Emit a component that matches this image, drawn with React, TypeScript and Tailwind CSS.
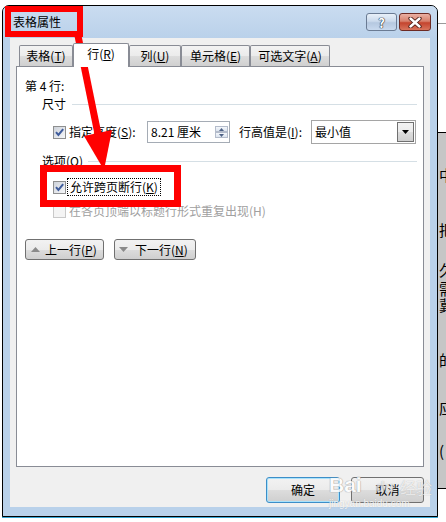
import React from "react";

function Check({ checked, disabled }: { checked?: boolean; disabled?: boolean }) {
  return (
    <div
      className={
        disabled
          ? "w-[13px] h-[13px] shrink-0 border border-[#c9c9c9] bg-[#f4f4f4]"
          : "w-[13px] h-[13px] shrink-0 border border-[#8e8f8f] bg-[linear-gradient(135deg,#cdd2da,#f6f7f9)] flex items-center justify-center"
      }
    >
      {checked && (
        <svg width="11" height="11" viewBox="0 0 11 11">
          <path d="M2 5.2 L4.4 8 L9.2 2.2" fill="none" stroke="#3f5c9c" strokeWidth="2" />
        </svg>
      )}
    </div>
  );
}

function Tab({ w, selected, children }: { w: string; selected?: boolean; children: React.ReactNode }) {
  return (
    <div
      className={
        selected
          ? `${w} h-[24px] -mb-px relative z-10 bg-white border border-b-0 border-[#898c95] rounded-t-[2px] flex items-center justify-center pb-[3px]`
          : `${w} h-[21px] bg-[linear-gradient(#f3f3f3_0%,#ebebeb_50%,#dddddd_50%,#d0d0d0_100%)] border border-b-0 border-[#898c95] rounded-t-[2px] flex items-center justify-center`
      }
    >
      <span className="text-[12px] leading-[14px] text-black whitespace-nowrap">{children}</span>
    </div>
  );
}

const btnBase =
  "flex items-center border border-[#707070] rounded-[3px] bg-[linear-gradient(#f2f2f2_0%,#ebebeb_50%,#dddddd_50%,#cfcfcf_100%)]";

export default function App() {
  return (
    <div className="relative w-[446px] h-[522px] overflow-hidden bg-white flex font-['Noto_Sans_CJK_SC','Noto_Sans',sans-serif] text-black">
      {/* left gap */}
      <div className="w-[2px] shrink-0" />

      {/* dialog */}
      <div className="w-[436px] h-[512px] mt-[5px] shrink-0 border border-black rounded-t-[7px] bg-[#b9d1ea] flex flex-col overflow-hidden shadow-[0_1px_0_#39a6d4]">
        {/* title bar */}
        <div className="h-[32px] shrink-0 flex items-center pl-[10px] pr-[6px] bg-[linear-gradient(#cadcf0,#bad1ea)]">
          <span className="text-[12px] leading-[14px]">表格属性</span>
          <div className="ml-auto flex gap-[2px]">
            <div className="w-[31px] h-[18px] rounded-[3px] border border-[#6a7b93] bg-[linear-gradient(#e8f0f9_0%,#cbdaec_45%,#b5c8e0_55%,#c8d9ee_100%)] flex items-center justify-center">
              <span className="text-[13px] leading-[13px] font-bold text-white [text-shadow:0_0_1px_#1e2a3a,0_0_1px_#1e2a3a,0_0_1px_#1e2a3a]">
                ?
              </span>
            </div>
            <div className="w-[32px] h-[18px] rounded-[3px] border border-[#6d2a23] bg-[linear-gradient(#eab0a3_0%,#d7806c_45%,#c4442e_55%,#d8755d_100%)] flex items-center justify-center">
              <svg width="16" height="11" viewBox="0 0 16 11">
                <path d="M3.5 1.5 L12.5 9.5 M12.5 1.5 L3.5 9.5" stroke="#4a1a14" strokeWidth="4.2" strokeLinecap="round" />
                <path d="M3.5 1.5 L12.5 9.5 M12.5 1.5 L3.5 9.5" stroke="#ffffff" strokeWidth="2.4" strokeLinecap="round" />
              </svg>
            </div>
          </div>
        </div>

        {/* body */}
        <div className="mx-[7px] w-[420px] h-[469px] shrink-0 bg-[#f0f0f0] flex flex-col">
          {/* tabs */}
          <div className="h-[28px] shrink-0 flex items-end pl-[9px]">
            <Tab w="w-[54px]">
              表格(<span className="underline">T</span>)
            </Tab>
            <Tab w="w-[56px]" selected>
              行(<span className="underline">R</span>)
            </Tab>
            <Tab w="w-[52px]">
              列(<span className="underline">U</span>)
            </Tab>
            <Tab w="w-[69px]">
              单元格(<span className="underline">E</span>)
            </Tab>
            <Tab w="w-[80px]">
              可选文字(<span className="underline">A</span>)
            </Tab>
          </div>

          {/* panel */}
          <div className="ml-[6px] w-[408px] h-[401px] shrink-0 bg-white border border-[#898c95] flex flex-col pl-[8px] pr-[6px] text-[12px] leading-[16px]">
            <div className="h-[16px] mt-[11px] flex items-center">第 4 行:</div>

            <div className="h-[16px] mt-[2px] flex items-center pl-[17px]">
              <span>尺寸</span>
              <div className="ml-[6px] flex-1 h-px bg-[#d5dfe5]" />
            </div>

            <div className="h-[24px] mt-[8px] flex items-center">
              <div className="ml-[28px] flex items-center">
                <Check checked />
                <span className="ml-[3px] w-[78px] whitespace-nowrap">
                  指定高度(<span className="underline">S</span>):
                </span>
              </div>
              <div className="w-[83px] h-[22px] border border-[#a5acb5] bg-white flex items-center pl-[3px]">
                <span className="whitespace-nowrap">8.21 厘米</span>
                <div className="ml-auto mr-[1px] w-[13px] flex flex-col gap-0">
                  <div className="h-[6px] border border-[#b4bccb] bg-[linear-gradient(#f4f7fb,#dce4ef)] flex items-center justify-center">
                    <svg width="5" height="3" viewBox="0 0 5 3">
                      <path d="M0 3 L2.5 0 L5 3 Z" fill="#4d6185" />
                    </svg>
                  </div>
                  <div className="h-[6px] border border-[#b4bccb] bg-[linear-gradient(#f4f7fb,#dce4ef)] flex items-center justify-center">
                    <svg width="5" height="3" viewBox="0 0 5 3">
                      <path d="M0 0 L2.5 3 L5 0 Z" fill="#4d6185" />
                    </svg>
                  </div>
                </div>
              </div>
              <span className="ml-[9px] w-[72px] whitespace-nowrap">
                行高值是(<span className="underline">I</span>):
              </span>
              <div className="w-[105px] h-[24px] border border-[#a5a5a5] bg-white flex items-center pl-[3px]">
                <span>最小值</span>
                <div className="ml-auto mr-px w-[17px] h-[20px] border border-[#707070] bg-[linear-gradient(#f2f2f2_0%,#ebebeb_50%,#dddddd_50%,#cfcfcf_100%)] flex items-center justify-center">
                  <svg width="7" height="4" viewBox="0 0 7 4">
                    <path d="M0 0 L7 0 L3.5 4 Z" fill="#000" />
                  </svg>
                </div>
              </div>
            </div>

            <div className="h-[16px] mt-[9px] flex items-center pl-[17px]">
              <span>
                选项(<span className="underline">O</span>)
              </span>
              <div className="ml-[5px] flex-1 h-px bg-[#d5dfe5]" />
            </div>

            <div className="h-[18px] mt-[9px] flex items-center">
              <div className="ml-[28px] flex items-center">
                <Check checked />
                <span className="ml-[1px] h-[18px] px-[2px] border border-dotted border-black flex items-center whitespace-nowrap">
                  允许跨页断行(<span className="underline">K</span>)
                </span>
              </div>
            </div>

            <div className="h-[16px] mt-[7px] flex items-center">
              <div className="ml-[28px] flex items-center text-[#a0a0a0]">
                <Check disabled />
                <span className="ml-[3px] whitespace-nowrap">在各页顶端以标题行形式重复出现(H)</span>
              </div>
            </div>

            <div className="mt-[20px] flex gap-[10px]">
              <div className={`${btnBase} w-[79px] h-[21px] pl-[5px]`}>
                <svg width="9" height="5" viewBox="0 0 9 5">
                  <path d="M0 5 L4.5 0 L9 5 Z" fill="#8a8a8a" />
                </svg>
                <span className="ml-[5px] whitespace-nowrap">
                  上一行(<span className="underline">P</span>)
                </span>
              </div>
              <div className={`${btnBase} w-[82px] h-[21px] pl-[4px]`}>
                <svg width="9" height="5" viewBox="0 0 9 5">
                  <path d="M0 0 L9 0 L4.5 5 Z" fill="#8a8a8a" />
                </svg>
                <span className="ml-[7px] whitespace-nowrap">
                  下一行(<span className="underline">N</span>)
                </span>
              </div>
            </div>
          </div>

          {/* bottom buttons */}
          <div className="mt-[10px] h-[26px] flex justify-end gap-[11px] pr-[6px] text-[12px] leading-[16px]">
            <div className="w-[74px] h-[26px] rounded-[3px] border border-[#3c8ec8] shadow-[inset_0_0_0_1px_#a9e2fb] bg-[linear-gradient(#f2f2f2_0%,#ebebeb_50%,#dddddd_50%,#cfcfcf_100%)] flex items-center justify-center">
              确定
            </div>
            <div className={`${btnBase} w-[73px] h-[26px] justify-center`}>取消</div>
          </div>
        </div>
      </div>

      {/* background document strip on the right */}
      <div className="w-[8px] shrink-0 flex flex-col">
        <div className="h-[23px]" />
        <div className="h-px bg-[#9a9a9a]" />
        <div className="h-[108px]" />
        <div className="h-px bg-black" />
        <div className="h-[355px] bg-[#c6c6c6] flex flex-col overflow-hidden text-[15px] leading-[15px] font-['Noto_Sans_CJK_SC',sans-serif]">
          <div className="mt-[34px] h-[15px] ml-px whitespace-nowrap">中</div>
          <div className="mt-[40px] h-[15px] ml-px whitespace-nowrap">把</div>
          <div className="mt-[25px] h-[15px] ml-px whitespace-nowrap">久</div>
          <div className="mt-[4px] h-[15px] ml-px whitespace-nowrap">需</div>
          <div className="mt-px h-[15px] ml-px whitespace-nowrap">冀</div>
          <div className="mt-[40px] h-[15px] ml-px whitespace-nowrap">的</div>
          <div className="mt-[33px] h-[15px] ml-px whitespace-nowrap">应</div>
          <div className="mt-[28px] h-[15px] ml-px whitespace-nowrap">(</div>
        </div>
        <div className="h-px bg-black" />
      </div>

      {/* baidu watermark */}
      <div className="absolute left-[329px] top-[474px] flex flex-col items-start pointer-events-none opacity-80">
        <div className="flex items-end">
          <span className="font-['Liberation_Sans',sans-serif] font-bold text-[21px] leading-[22px] text-white [text-shadow:0_0_1px_#8a8a8a,0_0_1px_#8a8a8a]">
            Bai
          </span>
          <span className="ml-[14px] font-['Liberation_Sans',sans-serif] font-bold text-[15px] leading-[18px] text-white/70 [text-shadow:0_0_1px_#9a9a9a]">
            du
          </span>
          <span className="ml-[6px] text-[16px] leading-[18px] text-white/80 [text-shadow:0_0_1px_#9a9a9a]">经验</span>
        </div>
        <span className="mt-[3px] font-['Liberation_Sans',sans-serif] text-[10px] leading-[10px] text-white [text-shadow:0_0_1px_#a0a0a0]">
          jingyan.baidu.com
        </span>
      </div>

      {/* red annotations */}
      <svg className="absolute left-0 top-0 pointer-events-none" width="446" height="522" viewBox="0 0 446 522">
        <rect x="8" y="9" width="72" height="25" fill="none" stroke="#ff0000" strokeWidth="6" />
        <line x1="77" y1="31" x2="98" y2="134" stroke="#ff0000" strokeWidth="7" />
        <polygon points="84,136 112,130 104,170" fill="#ff0000" />
        <rect x="43.5" y="168.5" width="134" height="35" fill="none" stroke="#ff0000" strokeWidth="7" />
      </svg>
    </div>
  );
}
